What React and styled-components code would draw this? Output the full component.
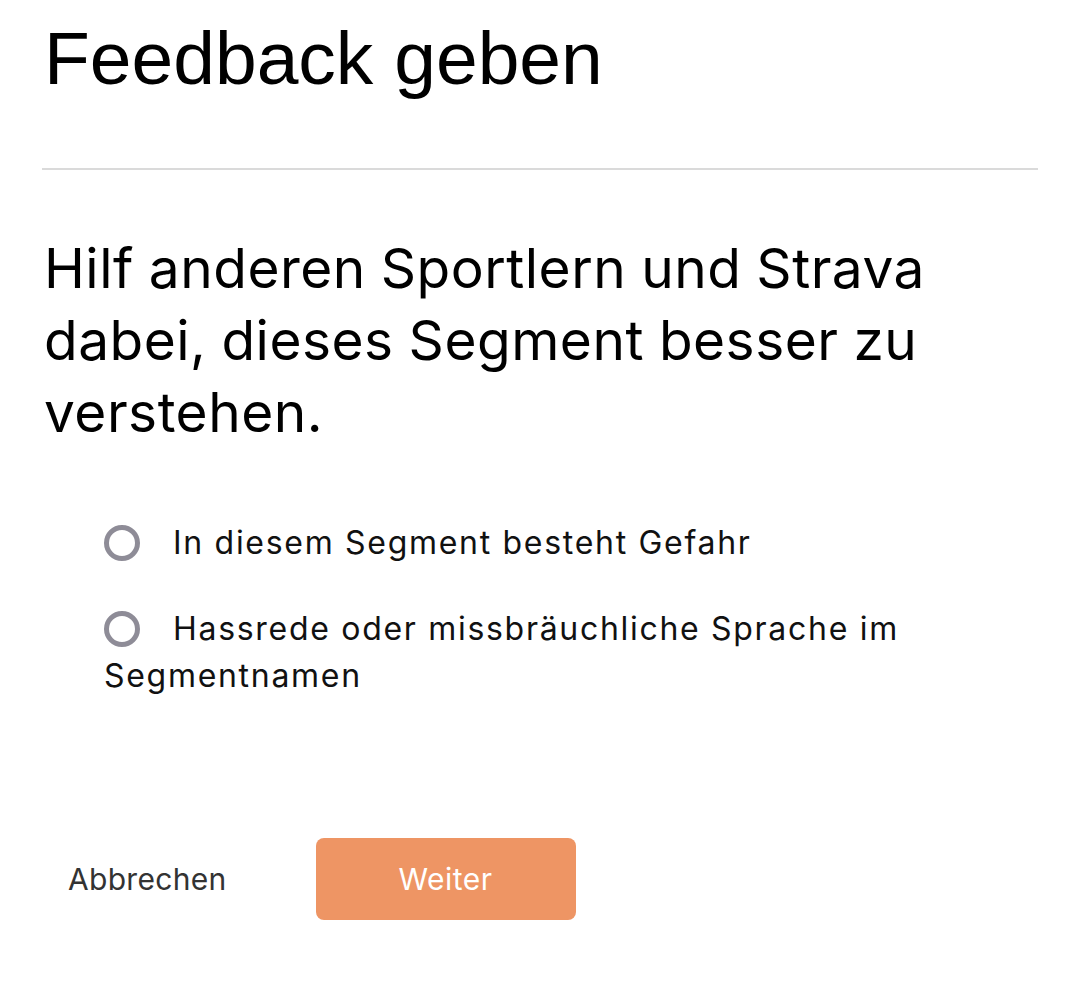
import React from 'react'
import styled, { createGlobalStyle } from 'styled-components'

const GlobalStyle = createGlobalStyle`
body {
    margin: 0;
    background: #fff;
    font-family: Inter, "Noto Sans", sans-serif;
    color: #000;
}
`

function App() {
    return (
        <>
            <GlobalStyle />
            <Page>
                <Title>Feedback geben</Title>
                <Divider />
                <Question>
                    Hilf anderen Sportlern und Strava dabei, dieses Segment besser zu verstehen.
                </Question>
                <Options>
                    <Option>
                        <Radio type="radio" name="reason" />
                        In diesem Segment besteht Gefahr
                    </Option>
                    <Option>
                        <Radio type="radio" name="reason" />
                        Hassrede oder missbräuchliche Sprache im Segmentnamen
                    </Option>
                </Options>
                <Actions>
                    <CancelButton>Abbrechen</CancelButton>
                    <PrimaryButton>Weiter</PrimaryButton>
                </Actions>
            </Page>
        </>
    )
}

export default App

const Page = styled.main`
padding: 21px 42px 0 42px;
display: flex;
flex-direction: column;
`

const Title = styled.h1`
margin: 0 0 72px 2px;
font-family: "Liberation Sans", Arial, sans-serif;
font-weight: 400;
font-size: 75px;
line-height: 1;
`

const Divider = styled.hr`
margin: 0;
border: none;
border-top: 2px solid #dadada;
`

const Question = styled.h2`
margin: 62px 60px 0 2px;
font-weight: 400;
font-size: 55px;
line-height: 72px;
letter-spacing: 0.5px;
word-spacing: -1px;
`

const Options = styled.div`
margin: 71px 0 0 62px;
display: flex;
flex-direction: column;
gap: 39px;
`

const Option = styled.label`
font-size: 32px;
line-height: 47px;
letter-spacing: 1.7px;
color: #111;
cursor: pointer;
`

const Radio = styled.input`
appearance: none;
margin: 0 33px 0 0;
width: 36px;
height: 36px;
border: 5px solid #8e8c97;
border-radius: 50%;
vertical-align: -7px;
box-sizing: border-box;
`

const Actions = styled.div`
margin-top: 139px;
display: flex;
align-items: center;
gap: 89px;
`

const CancelButton = styled.button`
background: none;
border: none;
padding: 0 0 0 26px;
font-family: Inter, sans-serif;
font-size: 30px;
letter-spacing: 0.3px;
color: #333;
cursor: pointer;
`

const PrimaryButton = styled.button`
width: 260px;
height: 82px;
border: none;
border-radius: 8px;
background: #ee9564;
color: #fff;
font-family: Inter, sans-serif;
font-size: 30px;
letter-spacing: 0.5px;
cursor: pointer;
`
